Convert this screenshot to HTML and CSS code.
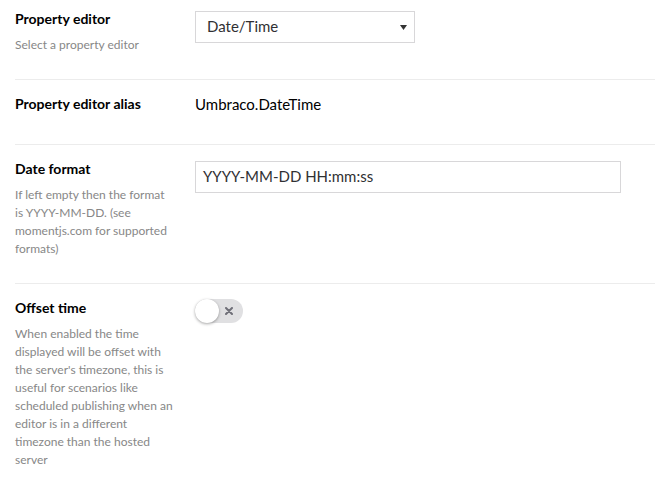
FILE: index.html
```html
<!DOCTYPE html>
<html lang="en">
<head>
<meta charset="utf-8">
<title>Property editor settings</title>
<link rel="stylesheet" href="styles.css">
</head>
<body>
<div class="panel">
  <div class="group first">
    <div class="label-col">
      <div class="label">Property editor</div>
      <div class="desc">Select a property editor</div>
    </div>
    <div class="controls">
      <div class="select">
        <span class="select-text">Date/Time</span>
        <svg class="caret" width="7" height="5" viewBox="0 0 7 5"><path d="M0 0H7L3.5 5Z" fill="#333"/></svg>
      </div>
    </div>
  </div>
  <div class="group">
    <div class="label-col">
      <div class="label">Property editor alias</div>
    </div>
    <div class="controls">
      <div class="value">Umbraco.DateTime</div>
    </div>
  </div>
  <div class="group">
    <div class="label-col">
      <div class="label">Date format</div>
      <div class="desc">If left empty then the format is YYYY-MM-DD. (see momentjs.com for supported formats)</div>
    </div>
    <div class="controls">
      <div class="input">YYYY-MM-DD HH:mm:ss</div>
    </div>
  </div>
  <div class="group">
    <div class="label-col">
      <div class="label">Offset time</div>
      <div class="desc">When enabled the time displayed will be offset with the server's timezone, this is useful for scenarios like scheduled publishing when an editor is in a different timezone than the hosted server</div>
    </div>
    <div class="controls">
      <div class="toggle">
        <span class="knob"></span>
        <svg class="toggle-x" width="8" height="8" viewBox="0 0 8 8"><path d="M1 1L7 7M7 1L1 7" stroke="#6f6f78" stroke-width="2" stroke-linecap="round"/></svg>
      </div>
    </div>
  </div>
</div>
</body>
</html>
```

FILE: styles.css
```css
* { box-sizing: border-box; }
html, body { margin: 0; padding: 0; background: #fff; }
body {
  font-family: Lato, "Open Sans", "Liberation Sans", sans-serif;
  color: #303033;
  overflow: hidden;
}
.panel { margin: 0 3px 0 15px; }
.group {
  display: flex;
  align-items: flex-start;
  padding: 14px 0 25px;
  border-bottom: 1px solid #ececec;
}
.group.first { padding-top: 9px; }
.label-col { width: 160px; margin-right: 20px; flex: none; }
.label {
  font-size: 14px;
  font-weight: 700;
  line-height: 20px;
  color: #000;
}
.desc {
  margin-top: 7px;
  font-size: 12px;
  line-height: 18px;
  color: #878787;
}
.controls { flex: 1; min-width: 0; }
.select {
  margin-top: 2px;
  width: 220px;
  height: 32px;
  border: 1px solid #d8d7d9;
  display: flex;
  align-items: center;
  justify-content: space-between;
  padding: 0 7px 2px 11px;
  font-size: 15px;
  color: #303033;
}
.caret { display: block; margin-top: 2px; }
.value {
  font-size: 15px;
  line-height: 20px;
  min-height: 25px;
  color: #000;
}
.input {
  margin-top: 2px;
  width: 426px;
  height: 32px;
  border: 1px solid #d8d7d9;
  padding: 0 7px 2px;
  display: flex;
  align-items: center;
  font-size: 15px;
  color: #303033;
}
.toggle {
  position: relative;
  margin-top: 1px;
  width: 48px;
  height: 24px;
  border-radius: 12px;
  background: #e0e0e2;
  display: flex;
  align-items: center;
  justify-content: flex-end;
  padding-right: 10px;
}
.knob {
  position: absolute;
  left: 0;
  top: 0;
  width: 24px;
  height: 24px;
  border-radius: 50%;
  background: #fff;
  box-shadow: 0 1px 3px rgba(0,0,0,0.35);
}
.toggle-x { display: block; }
```
